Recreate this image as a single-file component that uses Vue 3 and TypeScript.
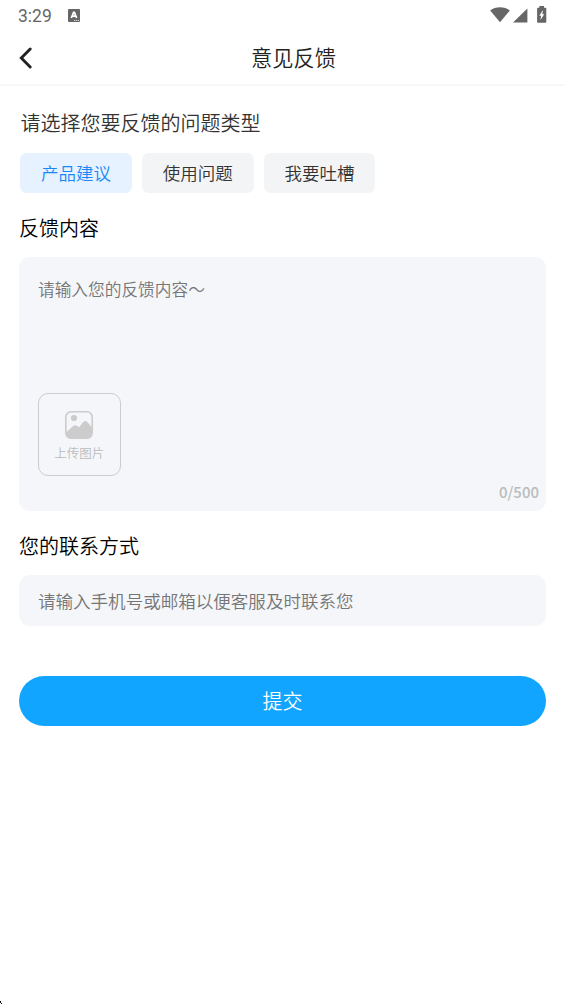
<script setup lang="ts">
import { computed, ref } from 'vue'

const types: string[] = ['产品建议', '使用问题', '我要吐槽']
const selected = ref(0)
const content = ref('')
const contact = ref('')
const limit = 500
const counter = computed(() => `${content.value.length}/${limit}`)
</script>

<template>
  <div class="screen">
    <div class="status">
      <span class="time">3:29</span>
      <svg class="app-icon" width="12" height="13" viewBox="0 0 12 13">
        <rect width="12" height="13" rx="1" fill="#666" />
        <path d="M3.3 9 L5.6 3.4 H6.4 L8.7 9 M4.2 7.2 H7.8" fill="none" stroke="#fff" stroke-width="1.7" />
        <path d="M6 11.5 H11" stroke="#ddd" stroke-width="1" stroke-dasharray="1.2 .7" />
      </svg>
      <svg class="signals" width="58" height="18" viewBox="0 0 58 18">
        <path d="M0.2 4.4 C5.5 0.1 14.5 0.1 19.8 4.4 L10 16.2 Z" fill="#666" />
        <path d="M37.4 2.4 V16.6 H23 Z" fill="#666" />
        <path d="M49.3 0 H54 V1.8 H55.4 Q56.3 1.8 56.3 2.8 V15.7 Q56.3 16.7 55.4 16.7 H48 Q47.1 16.7 47.1 15.7 V2.8 Q47.1 1.8 48 1.8 H49.3 Z" fill="#666" />
        <path d="M53 4 L49.3 9.8 H51.2 L50.3 14.3 L54.2 8.2 H52.3 Z" fill="#fff" />
      </svg>
    </div>

    <header class="header">
      <svg class="back" width="14" height="22" viewBox="0 0 14 22">
        <path d="M11.2 2 L2.3 11 L11.2 20" fill="none" stroke="#222" stroke-width="2.9" stroke-linecap="round" stroke-linejoin="miter" />
      </svg>
      <h1>意见反馈</h1>
    </header>

    <main class="content">
      <h2 class="question">请选择您要反馈的问题类型</h2>
      <div class="chips">
        <button
          v-for="(type, i) in types"
          :key="type"
          class="chip"
          :class="{ active: i === selected }"
          @click="selected = i"
        >{{ type }}</button>
      </div>

      <h2 class="label">反馈内容</h2>
      <div class="editor">
        <textarea v-model="content" :maxlength="limit" placeholder="请输入您的反馈内容～"></textarea>
        <div class="upload">
          <svg width="28" height="28" viewBox="0 0 28 28">
            <rect x="0.8" y="0.8" width="26.4" height="26.4" rx="5.2" fill="none" stroke="#ccc" stroke-width="1.6" />
            <circle cx="9" cy="7" r="3.1" fill="#ccc" />
            <path d="M1 21.5 L8 15.3 Q10.2 13.3 12.4 15.2 L14.2 16.3 L18.2 11 Q20.5 8.8 22.6 11.3 L27 16.4 V22 Q27 27 22 27 H6 Q1 27 1 22 Z" fill="#ccc" />
          </svg>
          <span>上传图片</span>
        </div>
        <span class="counter">{{ counter }}</span>
      </div>

      <h2 class="label contact-label">您的联系方式</h2>
      <input v-model="contact" class="contact" placeholder="请输入手机号或邮箱以便客服及时联系您" />
      <button class="submit">提交</button>
    </main>

    <svg class="corner" width="2" height="3" viewBox="0 0 2 3">
      <path d="M0 0 H1 V2 H2 V3 H1 V2 H0 Z" fill="#111" />
    </svg>
  </div>
</template>

<style>
body {
  background: #fff;
}
</style>

<style scoped>
.screen {
  position: relative;
  height: 1004px;
  overflow: hidden;
  background: #fff;
  font-family: "Noto Sans CJK SC", sans-serif;
  font-weight: 350;
}
.status {
  display: flex;
  height: 31px;
  padding: 0 17px 0 18px;
  align-items: center;
}
.time {
  width: 50px;
  color: #666;
  font: 400 17.5px/31px Roboto, sans-serif;
  padding-top: 1px;
}
.signals {
  margin-bottom: 1px;
  margin-left: auto;
}
.app-icon {
  margin-bottom: 1px;
}
.header {
  display: flex;
  box-sizing: border-box;
  height: 55px;
  padding: 0 20px 0 19px;
  align-items: center;
  border-bottom: 2px solid #f8f8f8;
}
h1,
h2 {
  margin: 0;
  font-weight: 350;
}
h1 {
  flex: 1;
  margin-left: 9px;
  padding-bottom: 2px;
  color: #222;
  font-size: 21.2px;
  line-height: 30px;
  text-align: center;
}
.content {
  display: flex;
  flex-direction: column;
  padding: 22px 19px 0;
}
.question {
  padding-left: 1.5px;
  color: #333;
  font-size: 20px;
  line-height: 30px;
}
.chips {
  display: flex;
  gap: 10px;
  margin: 15px 0 20px 1px;
}
button,
input,
textarea {
  box-sizing: border-box;
  margin: 0;
  border: 0;
  outline: 0;
  font-family: inherit;
  font-weight: inherit;
}
.chip {
  width: 111.8px;
  height: 40px;
  padding: 0 0 2px;
  border-radius: 7px;
  background: #f3f4f6;
  color: #333;
  font-size: 17.5px;
}
.chip.active {
  background: #e6f2ff;
  color: #1989fa;
}
.label {
  color: #000;
  font-size: 20px;
  line-height: 30px;
}
.editor {
  position: relative;
  box-sizing: border-box;
  height: 254px;
  margin-top: 14px;
  padding: 19px;
  border-radius: 11px;
  background: #f4f6fa;
}
textarea {
  display: block;
  width: 100%;
  height: 117px;
  padding: 0;
  resize: none;
  background: transparent;
  font-size: 16.7px;
  line-height: 26px;
}
textarea::placeholder,
input::placeholder {
  color: #757575;
  opacity: 1;
}
.upload {
  display: flex;
  box-sizing: border-box;
  width: 82.5px;
  height: 83px;
  padding-top: 17px;
  flex-direction: column;
  align-items: center;
  border: 1.4px solid #ccc;
  border-radius: 10px;
  color: #bbb;
  font-size: 12.5px;
  line-height: 18px;
}
.upload span {
  margin-top: 5px;
}
.counter {
  position: absolute;
  right: 7px;
  bottom: 7px;
  color: #bbb;
  font-size: 15px;
  font-weight: 500;
  line-height: 24px;
}
.contact-label {
  margin-top: 20px;
}
.contact {
  height: 51px;
  margin-top: 14px;
  padding: 0 19px;
  border-radius: 11px;
  background: #f4f6fa;
  font-size: 17.55px;
}
.submit {
  height: 50px;
  margin-top: 50px;
  padding: 0 0 2px;
  border-radius: 25px;
  background: #12a5ff;
  color: #fff;
  font-size: 20px;
}
.corner {
  position: absolute;
  bottom: 0;
  left: 0;
}
</style>
